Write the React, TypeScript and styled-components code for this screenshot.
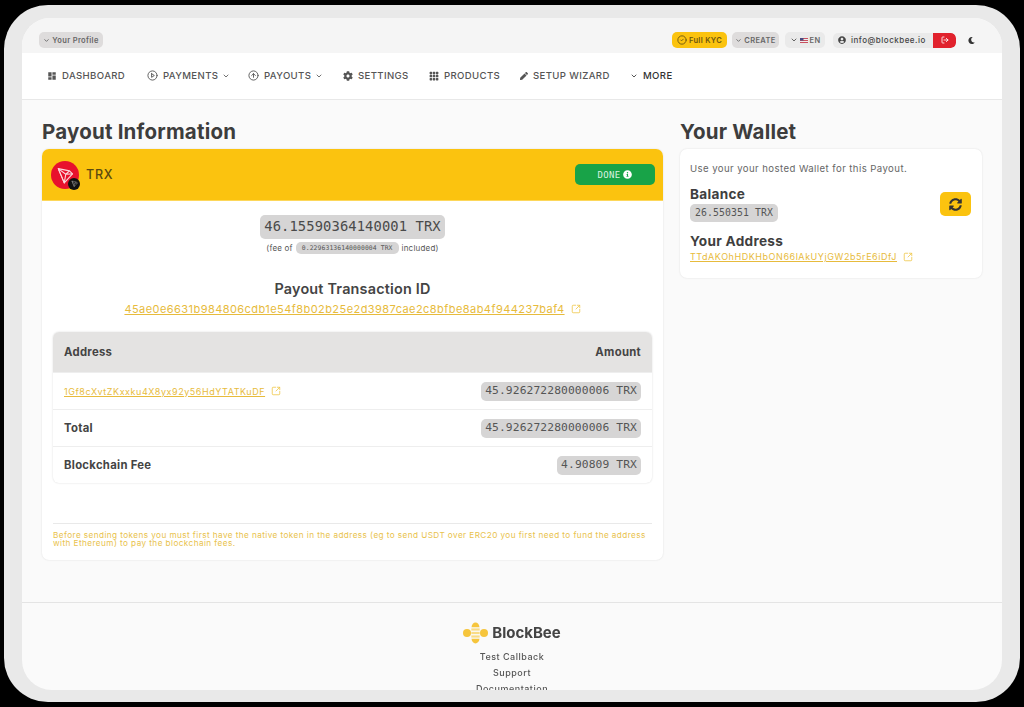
import React from "react";
import styled, { createGlobalStyle } from "styled-components";
import { FaCog, FaInfoCircle, FaMoon, FaPen, FaSyncAlt, FaUserCircle } from "react-icons/fa";
import { MdDashboard } from "react-icons/md";
import { BsGrid3X3GapFill } from "react-icons/bs";
import { LuChevronDown, LuCircleArrowUp, LuCircleCheck, LuCirclePlay, LuLogOut, LuSquareArrowOutUpRight } from "react-icons/lu";

const SANS = `"Inter", "Open Sans", "Liberation Sans", sans-serif`;
const MONO = `"DejaVu Sans Mono", "Liberation Mono", monospace`;

const Global = createGlobalStyle`
  html, body { margin: 0; padding: 0; background: #000; height: 100%; overflow: hidden; }
  body { font-family: ${SANS}; color: #444; }
  #root { height: 707px; padding: 5px 4px; box-sizing: border-box; }
  * { box-sizing: border-box; }
`;

const Device = styled.div`
  height: 697px;
  background: #e9e9e9;
  border-radius: 44px;
  padding: 13px 18px 12px;
  filter: blur(0.4px);
`;
const Screen = styled.div`
  height: 672px;
  background: #fafafa;
  border-radius: 28px 28px 30px 30px;
  overflow: hidden;
  display: flex;
  flex-direction: column;
`;
const TopBar = styled.div`
  height: 35px;
  flex: none;
  background: #f5f5f5;
  padding: 9px 24px 0 17px;
  display: flex;
  align-items: center;
  justify-content: space-between;
`;
const TopGroup = styled.div`
  display: flex;
  align-items: center;
`;
const Pill = styled.div<{ $bg?: string; $color?: string; $w?: number; $ml?: number }>`
  height: 16px;
  width: ${(p) => (p.$w ? `${p.$w}px` : "auto")};
  margin-left: ${(p) => p.$ml || 0}px;
  padding: 0 3px;
  border-radius: 5px;
  background: ${(p) => p.$bg || "#dedcdc"};
  color: ${(p) => p.$color || "#666"};
  font-size: 7.5px;
  font-weight: 600;
  letter-spacing: 0.35px;
  display: inline-flex;
  align-items: center;
  justify-content: center;
  gap: 2px;
  white-space: nowrap;
  flex: none;
`;
const Account = styled.div`
  height: 15px;
  width: 123px;
  margin-left: 8px;
  display: flex;
  border-radius: 5px;
  overflow: hidden;
  background: #eaeaea;
  font-size: 8px;
  font-weight: 500;
  letter-spacing: 0.5px;
  color: #444;
`;
const AccountMail = styled.div`
  flex: 1;
  display: flex;
  align-items: center;
  gap: 5px;
  padding-left: 5px;
  white-space: nowrap;
`;
const LogoutBox = styled.div`
  width: 23px;
  background: #e1222d;
  color: #fff;
  border-radius: 0 5px 5px 0;
  display: flex;
  align-items: center;
  justify-content: center;
`;
const MoonBox = styled.div`
  width: 10px;
  margin-left: 12px;
  color: #333;
  display: flex;
`;
const Flag = styled.svg`
  width: 8px;
  height: 5px;
`;
const Nav = styled.nav`
  height: 47px;
  flex: none;
  background: #fff;
  border-bottom: 1px solid #e8e8e8;
  padding: 0 0 1px 25px;
  display: flex;
  align-items: center;
`;
const NavItem = styled.div<{ $w: number; $dark?: boolean }>`
  width: ${(p) => p.$w}px;
  flex: none;
  display: flex;
  align-items: center;
  gap: 5px;
  font-size: 9.6px;
  font-weight: 500;
  letter-spacing: 0.36px;
  color: ${(p) => (p.$dark ? "#333" : "#555")};
  white-space: nowrap;
  svg { flex: none; }
`;
const NavCaret = styled(LuChevronDown)`
  margin-left: -1px;
`;
const Main = styled.main`
  height: 503px;
  flex: none;
  padding: 20px 20px 0;
  display: flex;
  gap: 17px;
  align-items: flex-start;
  border-bottom: 1px solid #e4e4e4;
`;
const LeftCol = styled.section`
  width: 621px;
  flex: none;
`;
const RightCol = styled.section`
  flex: 1;
`;
const Heading = styled.h2`
  margin: 0;
  height: 29px;
  font-size: 20.5px;
  line-height: 24px;
  font-weight: 700;
  color: #3d3d3d;
  letter-spacing: 0.2px;
`;
const Card = styled.div`
  background: #fff;
  border-radius: 7px;
  box-shadow: 0 0 2px rgba(0, 0, 0, 0.12);
  overflow: hidden;
`;
const CardHead = styled.div`
  height: 52px;
  background: #fbc30f;
  border-bottom: 1px solid #fdd75a;
  padding: 0 8px 0 9px;
  display: flex;
  align-items: center;
  justify-content: space-between;
`;
const CoinGroup = styled.div`
  display: flex;
  align-items: center;
  gap: 7px;
  font-size: 12.5px;
  font-weight: 500;
  letter-spacing: 0.8px;
  color: #5a4a10;
`;
const Coin = styled.div`
  position: relative;
  width: 28px;
  height: 28px;
  border-radius: 50%;
  background: #e8112d;
  display: flex;
  align-items: center;
  justify-content: center;
`;
const CoinBadge = styled.div`
  position: absolute;
  right: -1px;
  bottom: -1px;
  width: 12px;
  height: 12px;
  border-radius: 50%;
  background: #111;
  display: flex;
  align-items: center;
  justify-content: center;
`;
const DoneButton = styled.div`
  width: 80px;
  height: 21px;
  border-radius: 5px;
  background: #18a348;
  color: #d9f2e1;
  font-family: ${MONO};
  font-size: 9px;
  letter-spacing: 0.3px;
  display: flex;
  align-items: center;
  justify-content: center;
  gap: 3px;
`;
const CardBody = styled.div`
  padding: 14px 11px 13px;
  display: flex;
  flex-direction: column;
  align-items: center;
`;
const Mono = styled.span<{ $size: number; $pad: string }>`
  display: inline-block;
  font-family: ${MONO};
  font-size: ${(p) => p.$size}px;
  font-weight: 400;
  padding: ${(p) => p.$pad};
  letter-spacing: 0.1px;
  line-height: 1.25;
  background: #d6d5d5;
  color: #555;
  border-radius: 5px;
  white-space: nowrap;
`;
const Amount = styled(Mono)`
  color: #4a4a4a;
`;
const BalanceChip = styled(Mono)`
  margin-top: 1px;
`;
const FeeLine = styled.div`
  margin-top: 3px;
  font-size: 8px;
  color: #555;
  display: flex;
  align-items: center;
  gap: 3px;
  letter-spacing: 0.2px;
`;
const SubTitle = styled.h3`
  margin: 26px 0 0;
  font-size: 14.4px;
  line-height: 18px;
  font-weight: 600;
  color: #444;
  letter-spacing: 0.2px;
`;
const HashLine = styled.div`
  margin-top: 4px;
  display: flex;
  align-items: center;
  gap: 6px;
  color: #efc94f;
`;
const YellowLink = styled.a<{ $size: number; $ls: number }>`
  color: #e7bb3c;
  font-size: ${(p) => p.$size}px;
  font-weight: 400;
  letter-spacing: ${(p) => p.$ls}px;
  text-decoration: underline;
  text-underline-offset: 1px;
  white-space: nowrap;
`;
const Table = styled.div`
  margin-top: 16px;
  width: 599px;
  border-radius: 6px;
  overflow: hidden;
  box-shadow: 0 0 2px rgba(0, 0, 0, 0.16);
`;
const TableHead = styled.div`
  height: 40px;
  background: #e4e3e2;
  padding: 0 11px;
  display: flex;
  align-items: center;
  justify-content: space-between;
  font-size: 11.3px;
  font-weight: 700;
  letter-spacing: 0.3px;
  color: #444;
`;
const TableRow = styled.div<{ $h: number }>`
  height: ${(p) => p.$h}px;
  padding: 0 11px;
  display: flex;
  align-items: center;
  justify-content: space-between;
  border-top: 1px solid #eeeeee;
  font-size: 11.3px;
  font-weight: 700;
  letter-spacing: 0.3px;
  color: #444;
`;
const LinkCell = styled.div`
  display: flex;
  align-items: center;
  gap: 6px;
  color: #efc94f;
`;
const AddressLink = styled(LinkCell)`
  margin-top: 1px;
`;
const Note = styled.p`
  margin: 40px 0 0;
  width: 599px;
  padding-top: 7px;
  border-top: 1px solid #e9e9e9;
  font-size: 8.2px;
  line-height: 8px;
  letter-spacing: 0.42px;
  color: #e9c24c;
`;
const WalletBody = styled.div`
  height: 129px;
  padding: 15px 11px 0 10px;
  display: flex;
  justify-content: space-between;
`;
const WalletInfo = styled.div`
  display: flex;
  flex-direction: column;
  align-items: flex-start;
`;
const Lead = styled.div`
  font-size: 9.6px;
  line-height: 10px;
  letter-spacing: 0.42px;
  color: #666;
`;
const WalletLabel = styled.div<{ $mt: number }>`
  margin-top: ${(p) => p.$mt}px;
  font-size: 13.6px;
  line-height: 18px;
  font-weight: 700;
  letter-spacing: 0.3px;
  color: #3f3f3f;
`;
const SyncButton = styled.button`
  width: 31px;
  height: 24px;
  margin-top: 28px;
  border: 0;
  padding: 0;
  border-radius: 5px;
  background: #fbc30f;
  color: #333;
  display: flex;
  align-items: center;
  justify-content: center;
`;
const Footer = styled.footer`
  padding-top: 19px;
  display: flex;
  flex-direction: column;
  align-items: center;
`;
const Brand = styled.div`
  display: flex;
  align-items: center;
  gap: 4px;
  font-size: 15px;
  font-weight: 700;
  color: #444;
  line-height: 20px;
  margin-bottom: 5px;
`;
const FooterLink = styled.div`
  height: 16px;
  line-height: 16px;
  font-size: 9px;
  font-weight: 500;
  letter-spacing: 0.5px;
  color: #555;
`;

const TronMark: React.FC<{ size: number; color?: string }> = ({ size, color = "#fbd7dc" }) => (
  <svg width={size} height={size} viewBox="0 0 24 24" fill="none" stroke={color} strokeWidth="1.5" strokeLinejoin="round">
    <path d="M3 3.5 18 6.5 22 10.5 11 22.5Z" />
    <path d="M3 3.5 11 22.5 13 11 18 6.5M13 11 22 10.5M3 3.5 13 11" />
  </svg>
);

const BeeLogo = () => (
  <svg width="25" height="22" viewBox="0 0 25 22" fill="#f6c53c">
    <circle cx="4" cy="11" r="4" />
    <circle cx="21" cy="11" r="4" />
    <path d="M8.5 5.2C8.8 2.4 10.4.6 12.5.6s3.7 1.8 4 4.6Z" />
    <path d="M8.5 16.8C8.8 19.6 10.4 21.4 12.5 21.4s3.7-1.8 4-4.6Z" />
    <g fill="#f9dc86">
      <rect x="8.3" y="6.4" width="8.4" height="2.2" />
      <rect x="8.3" y="9.9" width="8.4" height="2.2" />
      <rect x="8.3" y="13.4" width="8.4" height="2.2" />
    </g>
  </svg>
);

const Ext: React.FC<{ size?: number }> = ({ size = 10 }) => <LuSquareArrowOutUpRight size={size} strokeWidth={2} />;

export default function App() {
  return (
    <>
      <Global />
      <Device>
        <Screen>
          <TopBar>
            <Pill $w={64}>
              <LuChevronDown size={7} strokeWidth={3} />
              Your Profile
            </Pill>
            <TopGroup>
              <Pill $bg="#fbc30f" $color="#6b5510" $w={55}>
                <LuCircleCheck size={10} strokeWidth={2.2} color="#6b5510" />
                Full KYC
              </Pill>
              <Pill $w={47} $ml={5}>
                <LuChevronDown size={7} strokeWidth={3} />
                CREATE
              </Pill>
              <Pill $bg="#eaeaea" $w={40} $ml={6}>
                <LuChevronDown size={8} strokeWidth={3} />
                <Flag viewBox="0 0 8 5">
                  <rect width="8" height="5" fill="#c9505f" />
                  <rect y="1" width="8" height="1" fill="#eee" />
                  <rect y="3" width="8" height="1" fill="#eee" />
                  <rect width="3.5" height="2.5" fill="#4a4a80" />
                </Flag>
                EN
              </Pill>
              <Account>
                <AccountMail>
                  <FaUserCircle size={8} />
                  info@blockbee.io
                </AccountMail>
                <LogoutBox>
                  <LuLogOut size={8} strokeWidth={2.5} />
                </LogoutBox>
              </Account>
              <MoonBox>
                <FaMoon size={7} />
              </MoonBox>
            </TopGroup>
          </TopBar>
          <Nav>
            <NavItem $w={100}>
              <MdDashboard size={10} />
              DASHBOARD
            </NavItem>
            <NavItem $w={101}>
              <LuCirclePlay size={11} />
              PAYMENTS
              <NavCaret size={8} strokeWidth={2.5} />
            </NavItem>
            <NavItem $w={95}>
              <LuCircleArrowUp size={11} />
              PAYOUTS
              <NavCaret size={8} strokeWidth={2.5} />
            </NavItem>
            <NavItem $w={86}>
              <FaCog size={10} />
              SETTINGS
            </NavItem>
            <NavItem $w={91}>
              <BsGrid3X3GapFill size={10} />
              PRODUCTS
            </NavItem>
            <NavItem $w={110}>
              <FaPen size={8} />
              SETUP WIZARD
            </NavItem>
            <NavItem $w={50} $dark>
              <LuChevronDown size={8} strokeWidth={2.5} />
              MORE
            </NavItem>
          </Nav>
          <Main>
            <LeftCol>
              <Heading>Payout Information</Heading>
              <Card>
                <CardHead>
                  <CoinGroup>
                    <Coin>
                      <TronMark size={18} />
                      <CoinBadge>
                        <TronMark size={7} color="#999" />
                      </CoinBadge>
                    </Coin>
                    TRX
                  </CoinGroup>
                  <DoneButton>
                    DONE
                    <FaInfoCircle size={9} color="#fff" />
                  </DoneButton>
                </CardHead>
                <CardBody>
                  <Amount $size={13.8} $pad="3px 4px 4px">46.15590364140001 TRX</Amount>
                  <FeeLine>
                    (fee of
                    <Mono $size={6.4} $pad="2px 6px">0.22963136140000004 TRX</Mono>
                    included)
                  </FeeLine>
                  <SubTitle>Payout Transaction ID</SubTitle>
                  <HashLine>
                    <YellowLink $size={11} $ls={0.44}>45ae0e6631b984806cdb1e54f8b02b25e2d3987cae2c8bfbe8ab4f944237baf4</YellowLink>
                    <Ext />
                  </HashLine>
                  <Table>
                    <TableHead>
                      <span>Address</span>
                      <span>Amount</span>
                    </TableHead>
                    <TableRow $h={37}>
                      <LinkCell>
                        <YellowLink $size={9} $ls={0.55}>1Gf8cXvtZKxxku4X8yx92y56HdYTATKuDF</YellowLink>
                        <Ext />
                      </LinkCell>
                      <Mono $size={11.3} $pad="2px 4px 3px">45.926272280000006 TRX</Mono>
                    </TableRow>
                    <TableRow $h={37}>
                      <span>Total</span>
                      <Mono $size={11.3} $pad="2px 4px 3px">45.926272280000006 TRX</Mono>
                    </TableRow>
                    <TableRow $h={37}>
                      <span>Blockchain Fee</span>
                      <Mono $size={11.3} $pad="2px 4px 3px">4.90809 TRX</Mono>
                    </TableRow>
                  </Table>
                  <Note>
                    Before sending tokens you must first have the native token in the address (eg to send USDT over ERC20 you first need to fund the address with Ethereum) to pay the blockchain fees.
                  </Note>
                </CardBody>
              </Card>
            </LeftCol>
            <RightCol>
              <Heading>Your Wallet</Heading>
              <Card>
                <WalletBody>
                  <WalletInfo>
                    <Lead>Use your your hosted Wallet for this Payout.</Lead>
                    <WalletLabel $mt={11}>Balance</WalletLabel>
                    <BalanceChip $size={9.8} $pad="3px 5px">26.550351 TRX</BalanceChip>
                    <WalletLabel $mt={10}>Your Address</WalletLabel>
                    <AddressLink>
                      <YellowLink $size={9} $ls={0.55}>TTdAKOhHDKHbON66lAkUYjGW2b5rE6iDfJ</YellowLink>
                      <Ext />
                    </AddressLink>
                  </WalletInfo>
                  <SyncButton aria-label="Refresh">
                    <FaSyncAlt size={13} />
                  </SyncButton>
                </WalletBody>
              </Card>
            </RightCol>
          </Main>
          <Footer>
            <Brand>
              <BeeLogo />
              BlockBee
            </Brand>
            <FooterLink>Test Callback</FooterLink>
            <FooterLink>Support</FooterLink>
            <FooterLink>Documentation</FooterLink>
          </Footer>
        </Screen>
      </Device>
    </>
  );
}
